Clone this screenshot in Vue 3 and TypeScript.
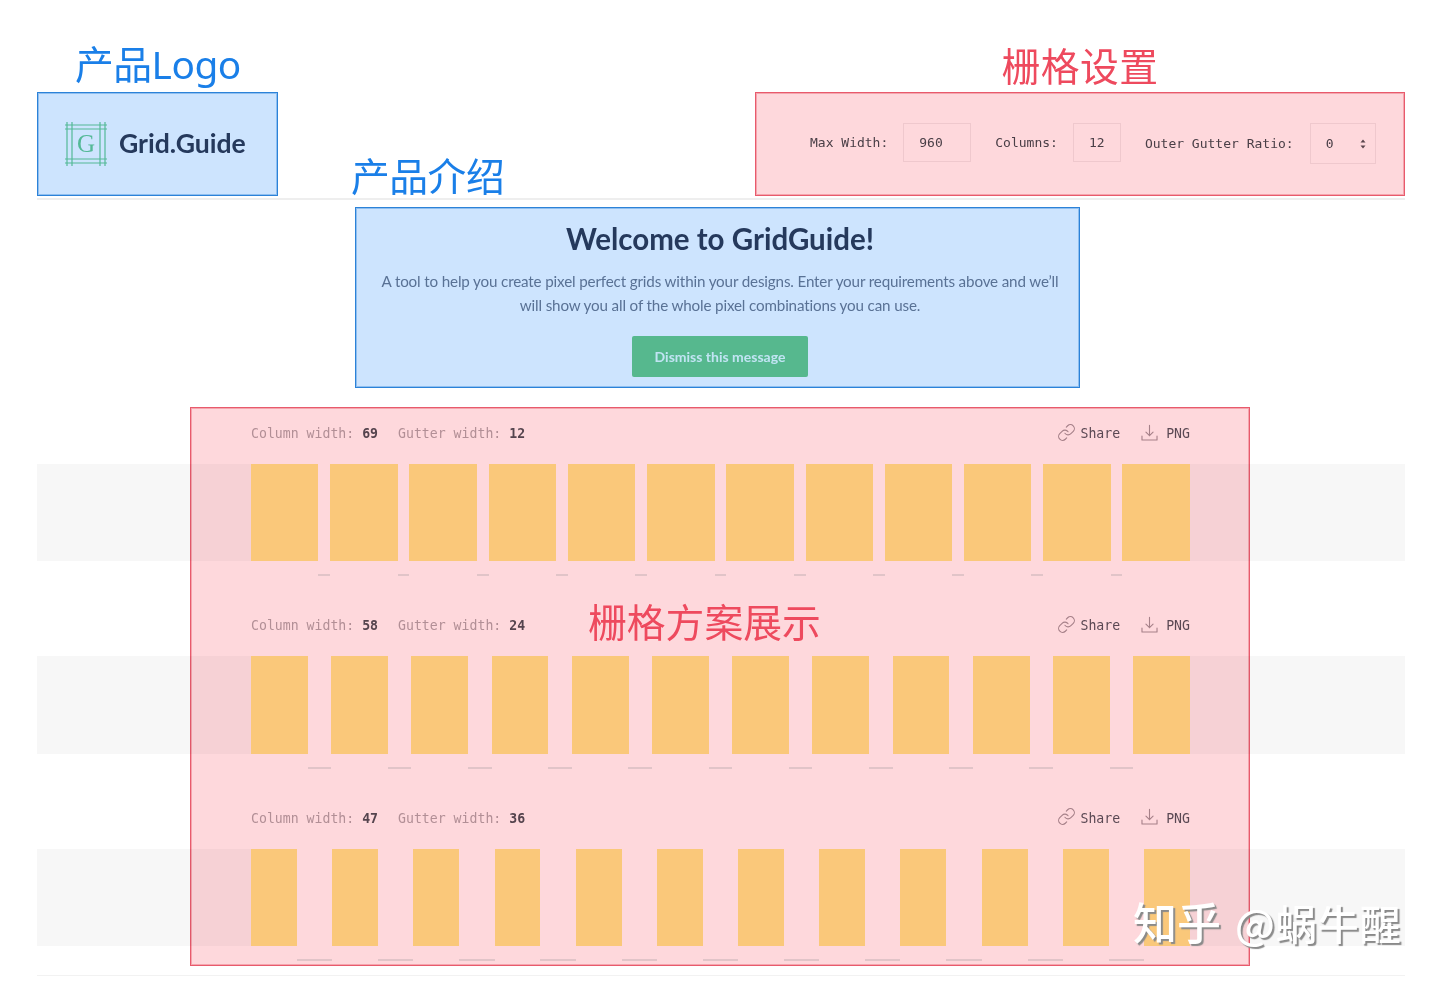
<template>
  <div class="page">
    <header class="top-bar">
      <div class="logo-block">
        <svg class="logo-icon" viewBox="0 0 42 44" fill="none">
          <g stroke="#68cf98" stroke-width="1.2">
            <path d="M0 3h42M0 7h42M0 37h42M0 41h42" />
            <path d="M2 0v44M7 0v44M35 0v44M40 0v44" />
          </g>
          <text x="21" y="30" text-anchor="middle" class="logo-letter">G</text>
        </svg>
        <span class="logo-name">Grid.Guide</span>
        <span class="note note-blue"></span>
        <span class="note-label label-blue label-logo">产品Logo</span>
      </div>

      <form class="settings" @submit.prevent>
        <label class="field">
          <span>Max Width:</span>
          <input v-model="maxWidth" class="input width-input" type="text" />
        </label>
        <label class="field">
          <span>Columns:</span>
          <input v-model="columns" class="input columns-input" type="text" />
        </label>
        <label class="field">
          <span>Outer Gutter Ratio:</span>
          <span class="select-wrap">
            <select v-model="ratio" class="input ratio-select">
              <option value="0">0</option>
              <option value="1">1</option>
              <option value="2">2</option>
            </select>
            <svg class="select-arrows" viewBox="0 0 6 10">
              <path d="M3 0.5 5.5 3.5H0.5zM3 9.5 0.5 6.5H5.5z" fill="#5a5058" />
            </svg>
          </span>
        </label>
        <span class="note note-red"></span>
        <span class="note-label label-red label-settings">栅格设置</span>
      </form>
    </header>

    <section class="welcome">
      <h1>Welcome to GridGuide!</h1>
      <p>
        A tool to help you create pixel perfect grids within your designs. Enter your requirements above and we’ll<br />
        will show you all of the whole pixel combinations you can use.
      </p>
      <button type="button" class="dismiss">Dismiss this message</button>
      <span class="note note-blue"></span>
      <span class="note-label label-blue label-intro">产品介绍</span>
    </section>

    <main class="grids">
      <section v-for="grid in grids" :key="grid.col" class="grid-item">
        <div class="grid-meta">
          <div class="grid-sizes">
            <span>Column width: <b>{{ grid.col }}</b></span>
            <span>Gutter width: <b>{{ grid.gutter }}</b></span>
          </div>
          <div class="grid-actions">
            <a class="action action-share">
              <svg class="action-icon" viewBox="0 0 24 24" fill="none">
                <path d="M10 13a5 5 0 0 0 7.54.54l3-3a5 5 0 0 0-7.07-7.07l-1.72 1.71" />
                <path d="M14 11a5 5 0 0 0-7.54-.54l-3 3a5 5 0 0 0 7.07 7.07l1.71-1.71" />
              </svg>
              Share
            </a>
            <a class="action action-png">
              <svg class="action-icon" viewBox="0 0 24 24" fill="none">
                <path d="M12 3v13M7.5 11.5 12 16l4.500-4.500M2.500 16.500v5h19v-5" />
              </svg>
              PNG
            </a>
          </div>
        </div>
        <div class="grid-strip">
          <div class="grid-columns">
            <span
              v-for="n in 12"
              :key="n"
              class="grid-col"
              :style="{ width: px(grid.col) }"
            ></span>
          </div>
        </div>
        <div class="grid-marks" :style="{ paddingLeft: px(grid.col), gap: px(grid.col) }">
          <span v-for="n in 11" :key="n" class="grid-mark" :style="{ width: px(grid.gutter) }"></span>
        </div>
      </section>
      <div class="grids-end"></div>

      <span class="note note-red note-grids"></span>
      <span class="note-label label-red label-grids">栅格方案展示</span>
    </main>

    <div class="watermark">知乎 <span class="watermark-name">@蜗牛醒</span></div>
  </div>
</template>

<script setup lang="ts">
import { ref } from 'vue';

interface GridOption {
  col: number;
  gutter: number;
}

// 960 wide grid, drawn slightly smaller in the screenshot
const scale = 939 / 960;

const maxWidth = ref('960');
const columns = ref('12');
const ratio = ref('0');

const grids: GridOption[] = [
  { col: 69, gutter: 12 },
  { col: 58, gutter: 24 },
  { col: 47, gutter: 36 },
];

const px = (value: number) => `${value * scale}px`;
</script>

<style scoped>
.page {
  position: relative;
  width: 1368px;
  padding: 92px 35px 0 37px;
  font-family: "DejaVu Sans Mono", "Liberation Mono", monospace;
  color: #4a4a52;
}

.top-bar {
  display: flex;
  justify-content: space-between;
  padding-bottom: 2px;
  border-bottom: 2px solid #eeeeee;
}

.logo-block {
  position: relative;
  box-sizing: border-box;
  display: flex;
  align-items: center;
  gap: 12px;
  width: 241px;
  height: 104px;
  padding-left: 28px;
}

.logo-icon {
  width: 42px;
  height: 44px;
}

.logo-letter {
  font-family: "Liberation Serif", serif;
  font-size: 25px;
  fill: #68cf98;
}

.logo-name {
  margin-top: -2px;
  font-family: Lato, "Noto Sans", sans-serif;
  font-size: 26.6px;
  font-weight: 700;
  color: #2d3f5c;
}

.settings {
  position: relative;
  box-sizing: border-box;
  display: flex;
  align-items: flex-start;
  gap: 24px;
  width: 650px;
  height: 104px;
  margin: 0;
  padding: 31px 0 0 55px;
  font-size: 13px;
}

.field {
  display: flex;
  align-items: center;
  gap: 15px;
}

.input {
  box-sizing: border-box;
  height: 39px;
  padding: 0 0 0 15px;
  border: 1px solid #f0ecee;
  border-radius: 0;
  background: #ffffff;
  font: inherit;
  color: #4a4a52;
  outline: none;
}

.width-input {
  width: 68px;
}

.columns-input {
  width: 48px;
}

.select-wrap {
  position: relative;
  display: block;
  margin-left: 1px;
}

.ratio-select {
  display: block;
  width: 66px;
  height: 41px;
  appearance: none;
}

.select-arrows {
  position: absolute;
  top: 16px;
  right: 10px;
  width: 6px;
  height: 10px;
}

.welcome {
  position: relative;
  box-sizing: border-box;
  width: 725px;
  height: 181px;
  margin: 7px 0 0 318px;
  padding: 14px 15px 0 20px;
  font-family: Lato, "Noto Sans", sans-serif;
  text-align: center;
}

.welcome h1 {
  margin: 0;
  font-size: 29.5px;
  line-height: 36px;
  font-weight: 700;
  color: #2d3f5c;
}

.welcome p {
  margin: 13px 0 0;
  font-size: 15.2px;
  letter-spacing: -0.15px;
  line-height: 23.5px;
  color: #6f7f96;
}

.dismiss {
  display: block;
  width: 176px;
  height: 41px;
  margin: 19px auto 0;
  border: none;
  border-radius: 2px;
  background: #6bce8f;
  font-family: inherit;
  font-size: 14px;
  font-weight: 700;
  color: #f0fff4;
}

.grids {
  position: relative;
  margin-top: 28px;
}

.grid-item + .grid-item {
  margin-top: 32px;
}

.grid-meta {
  display: flex;
  justify-content: space-between;
  align-items: flex-start;
  height: 48px;
  margin: 0 215px 0 214px;
  font-size: 13.2px;
  line-height: 36px;
}

.grid-sizes {
  display: flex;
  gap: 20px;
  color: #b3a9ae;
}

.grid-sizes b {
  color: #55505a;
}

.grid-actions {
  display: flex;
  gap: 20px;
  color: #5a5560;
}

.action {
  display: flex;
  align-items: center;
  height: 36px;
}

.action-share {
  gap: 4px;
}

.action-png {
  gap: 7px;
}

.action-icon {
  width: 19px;
  height: 19px;
  margin-top: -4px;
  stroke: #a7989f;
  stroke-width: 1.400;
  stroke-linecap: round;
  stroke-linejoin: round;
}

.grid-strip {
  height: 97.4px;
  padding: 0 215px 0 214px;
  background: #f7f7f7;
}

.grid-columns {
  display: flex;
  justify-content: space-between;
  height: 100%;
  background: #ffffff;
}

.grid-col {
  display: block;
  height: 100%;
  background: #fbec8d;
}

.grid-marks {
  display: flex;
  height: 2px;
  margin: 13px 215px 0 214px;
}

.grid-mark {
  display: block;
  flex: none;
  height: 2px;
  background: #e2e8e8;
}

.grids-end {
  margin-top: 14px;
  border-bottom: 1px solid #f2f2f2;
}

.note {
  position: absolute;
  inset: 0;
  box-sizing: border-box;
  mix-blend-mode: multiply;
  pointer-events: none;
}

.note-blue {
  border: 1px solid #2c82d8;
  box-shadow: inset 0 0 0 1px #8fbff0;
  background: #cde4fe;
}

.note-red {
  border: 1px solid #e85a6c;
  box-shadow: inset 0 0 0 1px #f5a5ae;
  background: #fed8dc;
}

.note-grids {
  inset: auto;
  top: -9px;
  left: 153px;
  width: 1060px;
  height: 559px;
}

.note-label {
  position: absolute;
  font-family: "Noto Sans", "Noto Sans CJK SC", sans-serif;
  font-size: 38.8px;
  line-height: 44px;
  white-space: nowrap;
}

.label-blue {
  color: #1a7fe8;
}

.label-red {
  color: #ee4a5e;
}

.label-logo {
  top: -50px;
  left: 38px;
  letter-spacing: -0.5px;
}

.label-intro {
  top: -53px;
  left: -4px;
  letter-spacing: -0.5px;
}

.label-settings {
  top: -48px;
  left: 0;
  right: 0;
  letter-spacing: 0.5px;
  text-align: center;
}

.label-grids {
  top: 184px;
  left: 551px;
}

.watermark {
  position: absolute;
  top: 894px;
  left: 1133px;
  font-family: "Noto Sans CJK SC", sans-serif;
  font-size: 44px;
  line-height: 54px;
  font-weight: 500;
  word-spacing: 4px;
  color: #ffffff;
  text-shadow: 2px 2px 1px #8a8a8a;
  white-space: nowrap;
}

.watermark-name {
  font-size: 41px;
  letter-spacing: 1px;
}
</style>

<style>
body {
  margin: 0;
  background: #ffffff;
}
</style>
